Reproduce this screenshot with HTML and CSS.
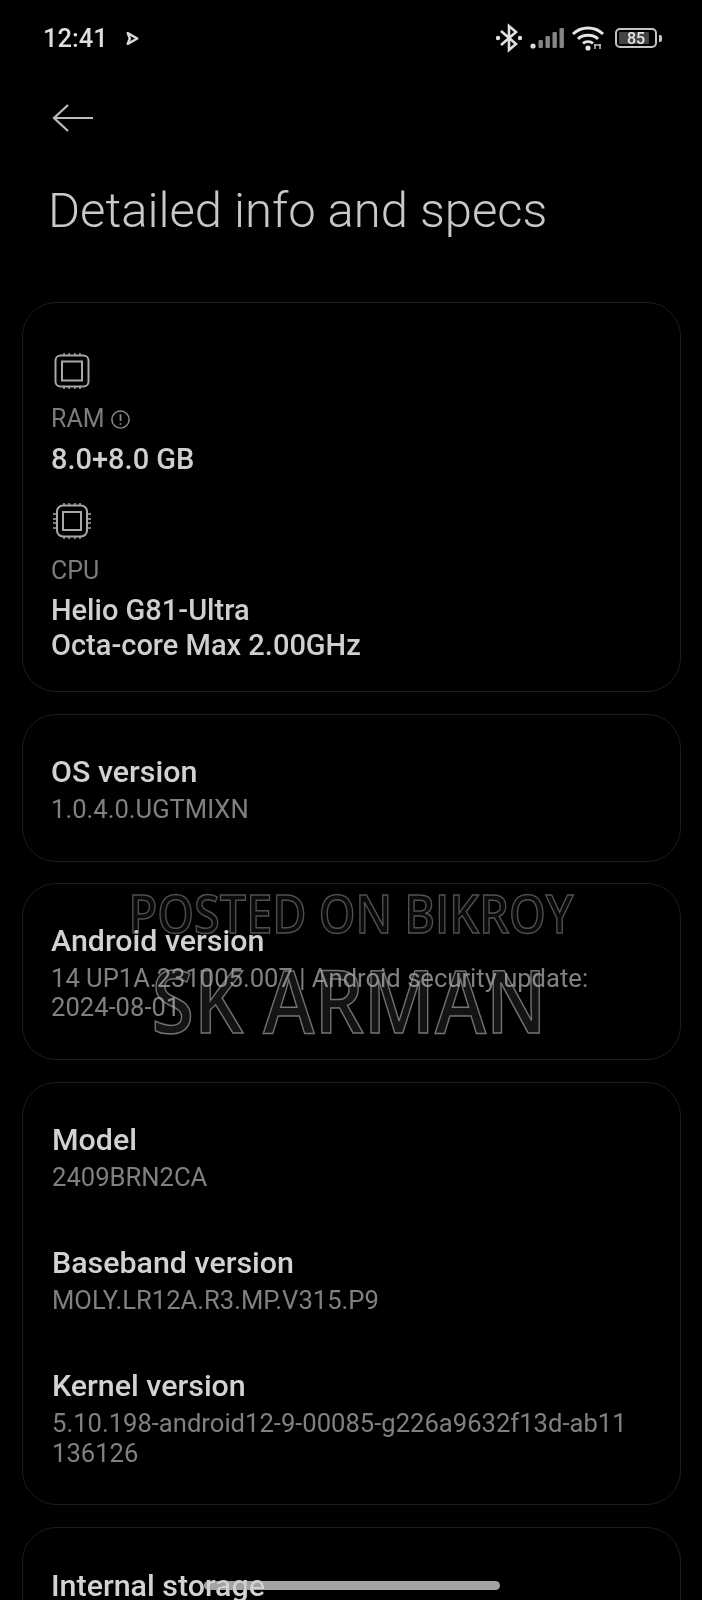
FILE: index.html
```html
<!DOCTYPE html>
<html lang="en">
<head>
<meta charset="utf-8">
<title>Detailed info and specs</title>
<link rel="stylesheet" href="styles.css">
</head>
<body>
<div class="phone">
  <header class="status">
    <div class="status-left">
      <span class="time">12:41</span>
      <svg class="play" width="15" height="15" viewBox="0 0 14 14"><path d="M2.500 2 L11.500 7 L2.500 12 L4.500 7 Z" fill="none" stroke="#d8d8d8" stroke-width="2.200" stroke-linejoin="round"/></svg>
    </div>
    <div class="status-right">
      <svg width="28" height="30" viewBox="0 0 28 30"><path d="M6 8 L21 21 L14 27 V3 L21 9 L6 22" fill="none" stroke="#e0e0e0" stroke-width="2.600"/><circle cx="3" cy="15" r="2.200" fill="#e0e0e0"/><circle cx="25" cy="15" r="2.200" fill="#e0e0e0"/></svg>
      <svg class="signal" width="34" height="24" viewBox="0 0 34 24"><circle cx="3" cy="20" r="2.600" fill="#ddd"/><rect x="8.500" y="14" width="4.400" height="8" rx="1.200" fill="#858585"/><rect x="15.500" y="10" width="4.400" height="12" rx="1.200" fill="#858585"/><rect x="22.500" y="6" width="4.400" height="16" rx="1.200" fill="#858585"/><rect x="29.500" y="2" width="4.400" height="20" rx="1.200" fill="#858585"/></svg>
      <svg class="wifi" width="34" height="26" viewBox="0 0 34 26"><path d="M2 9 C10 1 24 1 32 9" fill="none" stroke="#e4e4e4" stroke-width="3"/><path d="M7 14 C12 9 22 9 27 14" fill="none" stroke="#e4e4e4" stroke-width="3"/><path d="M12 18.500 C14.500 16 19.500 16 22 18.500" fill="none" stroke="#e4e4e4" stroke-width="2.800"/><circle cx="17" cy="23" r="2.600" fill="#e4e4e4"/><path d="M24 24 V19 M29 24 V19 M23 20 H30" stroke="#bbb" stroke-width="1.600" fill="none"/></svg>
      <div class="battery">
        <div class="battery-body"><div class="battery-fill"></div><span class="battery-num">85</span></div>
        <div class="battery-tip"></div>
      </div>
    </div>
  </header>

  <div class="nav">
    <svg width="44" height="32" viewBox="0 0 44 32"><path d="M3 16 H42 M17 3 L3 16 L17 29" fill="none" stroke="#bdbdbd" stroke-width="2.200"/></svg>
  </div>

  <h1 class="title">Detailed info and specs</h1>

  <section class="card card-specs">
    <svg class="chip" width="38" height="38" viewBox="0 0 38 38"><rect x="2.500" y="3.500" width="33" height="31" rx="5" fill="none" stroke="#a8a8a8" stroke-width="2"/><rect x="9" y="9.500" width="20" height="19" fill="none" stroke="#a8a8a8" stroke-width="2"/><path d="M11 1 V3 M16 1 V3 M22 1 V3 M27 1 V3 M11 35 V37 M16 35 V37 M22 35 V37 M27 35 V37" stroke="#a8a8a8" stroke-width="1.500"/></svg>
    <div class="spec-label">RAM
      <svg width="21" height="21" viewBox="0 0 20 20"><circle cx="10" cy="10" r="8.200" fill="none" stroke="#8c8c8c" stroke-width="1.400"/><path d="M10 5 V11.500 M10 13.500 V15" stroke="#8c8c8c" stroke-width="1.600"/></svg>
    </div>
    <div class="spec-value">8.0+8.0 GB</div>
    <svg class="chip chip-cpu" width="40" height="38" viewBox="0 0 40 38"><rect x="5" y="3.500" width="30" height="31" rx="6" fill="none" stroke="#a8a8a8" stroke-width="2"/><rect x="11" y="10" width="18" height="18" fill="none" stroke="#a8a8a8" stroke-width="2"/><path d="M12 1 V3 M17 1 V3 M23 1 V3 M28 1 V3 M12 35 V37 M17 35 V37 M23 35 V37 M28 35 V37 M1 12 H4 M1 17 H4 M1 21 H4 M1 26 H4 M36 12 H39 M36 17 H39 M36 21 H39 M36 26 H39" stroke="#a8a8a8" stroke-width="1.500"/></svg>
    <div class="spec-label spec-label-cpu">CPU</div>
    <div class="spec-value spec-value-cpu">Helio G81-Ultra<br>Octa-core Max 2.00GHz</div>
  </section>

  <section class="card card-os">
    <div class="name">OS version</div>
    <div class="detail">1.0.4.0.UGTMIXN</div>
  </section>

  <section class="card card-android">
    <div class="name">Android version</div>
    <div class="detail">14 UP1A.231005.007 | Android security update:<br>2024-08-01</div>
  </section>

  <section class="card card-model">
    <div class="row">
      <div class="name">Model</div>
      <div class="detail">2409BRN2CA</div>
    </div>
    <div class="row">
      <div class="name">Baseband version</div>
      <div class="detail">MOLY.LR12A.R3.MP.V315.P9</div>
    </div>
    <div class="row">
      <div class="name">Kernel version</div>
      <div class="detail">5.10.198-android12-9-00085-g226a9632f13d-ab11<br>136126</div>
    </div>
  </section>

  <section class="card card-storage">
    <div class="name">Internal storage</div>
  </section>

  <div class="watermark">
    <div class="wm-top">POSTED ON BIKROY</div>
    <div class="wm-bottom">SK ARMAN</div>
  </div>
  <div class="home-bar"></div>
</div>
</body>
</html>
```
FILE: styles.css
```css
* { box-sizing: border-box; }
html, body { margin: 0; padding: 0; background: #000; }
.phone {
  position: relative;
  width: 702px;
  height: 1600px;
  overflow: hidden;
  background: #000;
  font-family: Roboto, "Liberation Sans", sans-serif;
  color: #d4d4d4;
}
.status {
  display: flex;
  justify-content: space-between;
  align-items: center;
  height: 76px;
  padding: 0 40px 0 43px;
}
.status-left { display: flex; align-items: center; gap: 17px; }
.time { font-size: 25.500px; font-weight: 500; color: #dedede; }
.status-right { display: flex; align-items: center; gap: 7px; }
.battery { display: flex; align-items: center; gap: 2px; margin-left: 3px; }
.battery-body {
  position: relative;
  width: 42px;
  height: 20px;
  border: 2px solid #c4c4c4;
  border-radius: 5px;
  display: flex;
  align-items: center;
  justify-content: center;
}
.battery-fill {
  position: absolute;
  left: 2px;
  top: 2px;
  bottom: 2px;
  width: 30px;
  background: #444;
  border-radius: 1px;
}
.battery-num { position: relative; font-size: 16px; font-weight: 500; color: #e6e6e6; }
.battery-tip { width: 3px; height: 7px; background: #c4c4c4; border-radius: 0 2px 2px 0; }
.nav { padding: 0 0 0 51px; height: 32px; margin-top: 26px; display: flex; }
.title {
  margin: 47px 0 0 48px;
  font-size: 49px;
  line-height: 60px;
  font-weight: 300;
  color: #c8c8c8;
}
.card {
  margin: 0 21px 22px 22px;
  border: 1px solid #1c1c1c;
  border-radius: 34px;
  padding: 0 28px;
}
.card-specs { margin-top: 61px; height: 390px; padding-top: 49px; padding-left: 30px; }
.card-specs .spec-label, .card-specs .spec-value { margin-left: -2px; }
.card-os { height: 148px; padding-top: 39px; margin-bottom: 21px; }
.card-android { height: 177px; padding-top: 39px; }
.card-android .detail { margin-top: 5px; line-height: 29px; }
.card-model { height: 423px; padding: 39px 29px 0; }
.card-storage { height: 200px; padding-top: 40px; }
.chip { display: block; }
.chip-cpu { margin-left: -1px; margin-top: 25px; }
.spec-label {
  display: flex;
  align-items: center;
  gap: 5px;
  margin-top: 13px;
  font-size: 25px;
  line-height: 32px;
  color: #7c7c7c;
}
.spec-label-cpu { margin-top: 15px; }
.spec-value {
  margin-top: 7px;
  font-size: 29px;
  line-height: 35px;
  font-weight: 500;
  color: #cfcfcf;
}
.spec-value-cpu { margin-top: 6px; }
.name {
  font-size: 30.400px;
  line-height: 36px;
  font-weight: 500;
  color: #d2d2d2;
}
.detail {
  margin-top: 4px;
  font-size: 25.600px;
  line-height: 30px;
  color: #808080;
}
.row { margin-bottom: 53px; }
.watermark {
  position: absolute;
  left: 0;
  right: 0;
  top: 883px;
  text-align: center;
  font-family: "Open Sans", sans-serif;
  font-weight: 600;
}
.wm-top {
  font-size: 53px;
  line-height: 60px;
  color: rgba(255, 255, 255, 0.04);
  -webkit-text-stroke: 1.500px rgba(130, 130, 130, 0.6);
  transform: scaleX(0.882);
}
.wm-bottom {
  margin-top: 10px;
  font-size: 87px;
  line-height: 92px;
  color: rgba(255, 255, 255, 0.08);
  -webkit-text-stroke: 1.500px rgba(170, 170, 170, 0.65);
  transform: translateX(-2px) scaleX(0.888);
}
.home-bar {
  position: absolute;
  left: 204px;
  top: 1581px;
  width: 296px;
  height: 9px;
  border-radius: 5px;
  background: #a4a4a4;
  mix-blend-mode: lighten;
}
```
